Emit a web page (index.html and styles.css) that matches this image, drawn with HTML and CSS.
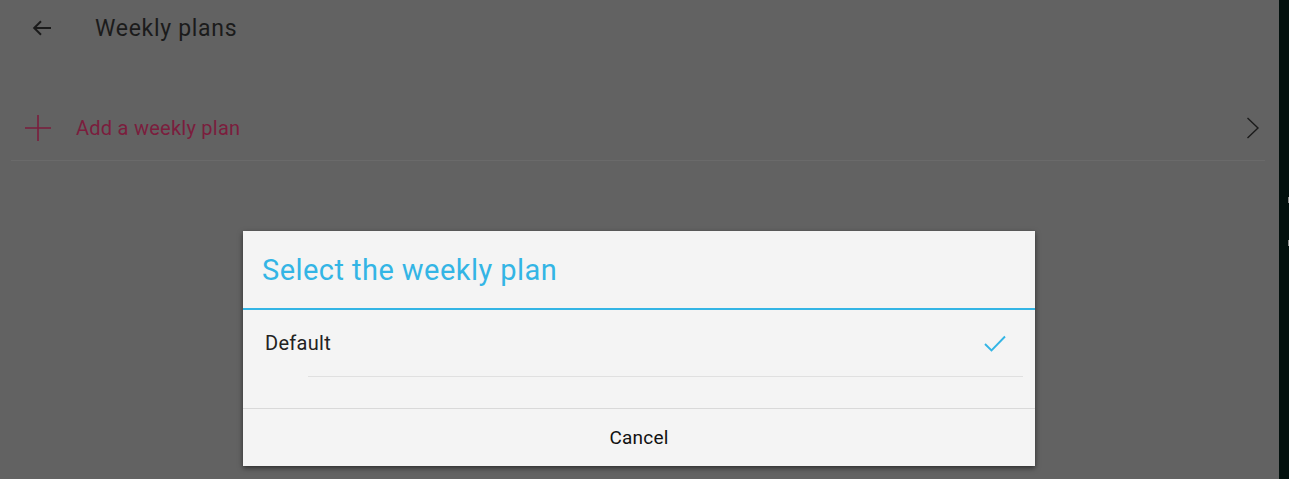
FILE: index.html
```html
<!DOCTYPE html>
<html>
<head>
<meta charset="utf-8">
<link rel="stylesheet" href="styles.css">
</head>
<body>
<div class="screen">
  <div class="app">
    <header class="toolbar">
      <svg class="back" width="24" height="24" viewBox="0 0 24 24"><path d="M21 12H4.5M11 5.2L4.2 12l6.8 6.8" fill="none" stroke="#1b1b1b" stroke-width="2"/></svg>
      <h1 class="title">Weekly plans</h1>
    </header>
    <div class="add-row">
      <svg class="plus" width="26" height="26" viewBox="0 0 26 26"><path d="M13 0V26M0 13H26" fill="none" stroke="#7b1d3d" stroke-width="1.6"/></svg>
      <span class="add-text">Add a weekly plan</span>
      <svg class="chev" width="14" height="22" viewBox="0 0 14 22"><path d="M1.5 1L12 11 1.5 21" fill="none" stroke="#1b1b1b" stroke-width="1.4"/></svg>
    </div>
  </div>
  <div class="strip">
    <span class="mark m1"></span>
    <span class="mark m2"></span>
  </div>
  <div class="dialog">
    <div class="dlg-title">Select the weekly plan</div>
    <div class="dlg-body">
      <div class="item">
        <span class="item-text">Default</span>
        <svg class="check" width="22" height="17" viewBox="0 0 22 17"><path d="M1 9l6.5 6.5L21 1.5" fill="none" stroke="#33b5e5" stroke-width="1.9"/></svg>
      </div>
    </div>
    <div class="dlg-actions">Cancel</div>
  </div>
</div>
</body>
</html>
```
FILE: styles.css
```css
html, body {
  margin: 0;
  padding: 0;
}
body {
  width: 1289px;
  height: 479px;
  overflow: hidden;
  background: #626262;
  font-family: Roboto, "Noto Sans", sans-serif;
}
.screen {
  position: relative;
  display: flex;
  width: 1289px;
  height: 479px;
}
.app {
  width: 1279px;
  display: flex;
  flex-direction: column;
}
.strip {
  width: 10px;
  background: #02100d;
  display: flex;
  flex-direction: column;
  align-items: flex-end;
}
.mark {
  display: block;
  width: 1px;
  height: 6px;
  background: #8a8a8a;
}
.m1 { margin-top: 197px; }
.m2 { margin-top: 37px; }
.toolbar {
  height: 56px;
  display: flex;
  align-items: center;
  padding-left: 30px;
}
.back {
  display: block;
}
.title {
  margin: 0 0 0 41px;
  font-size: 23px;
  font-weight: 400;
  color: #1b1b1b;
  letter-spacing: 0.7px;
}
.add-row {
  margin: 40px 14px 0 11px;
  height: 64px;
  border-bottom: 1px solid #6a6a6a;
  display: flex;
  align-items: center;
  padding-left: 14px;
  padding-right: 5px;
}
.plus {
  display: block;
}
.add-text {
  margin-left: 25px;
  font-size: 20px;
  color: #7b1d3d;
  letter-spacing: 0.25px;
  flex: 1;
}
.chev {
  display: block;
}
.dialog {
  position: absolute;
  left: 243px;
  top: 231px;
  width: 792px;
  height: 235px;
  background: #f4f4f4;
  box-shadow: 0 2px 5px rgba(0, 0, 0, 0.55);
  display: flex;
  flex-direction: column;
}
.dlg-title {
  box-sizing: border-box;
  height: 79px;
  padding-top: 1px;
  border-bottom: 2px solid #33b5e5;
  padding-left: 19px;
  display: flex;
  align-items: center;
  font-size: 29px;
  color: #33b5e5;
  letter-spacing: 0.45px;
}
.dlg-body {
  box-sizing: border-box;
  height: 99px;
  border-bottom: 1px solid #d9d9d9;
}
.item {
  height: 66px;
  margin-left: 65px;
  margin-right: 12px;
  border-bottom: 1px solid #e0e0e0;
  display: flex;
  align-items: center;
}
.item-text {
  margin-left: -43px;
  font-size: 20px;
  color: #222222;
  letter-spacing: 0.3px;
  flex: 1;
}
.check {
  display: block;
  margin-right: 17px;
}
.dlg-actions {
  flex: 1;
  display: flex;
  align-items: center;
  justify-content: center;
  font-size: 19px;
  color: #111111;
  letter-spacing: 0.2px;
}
```
